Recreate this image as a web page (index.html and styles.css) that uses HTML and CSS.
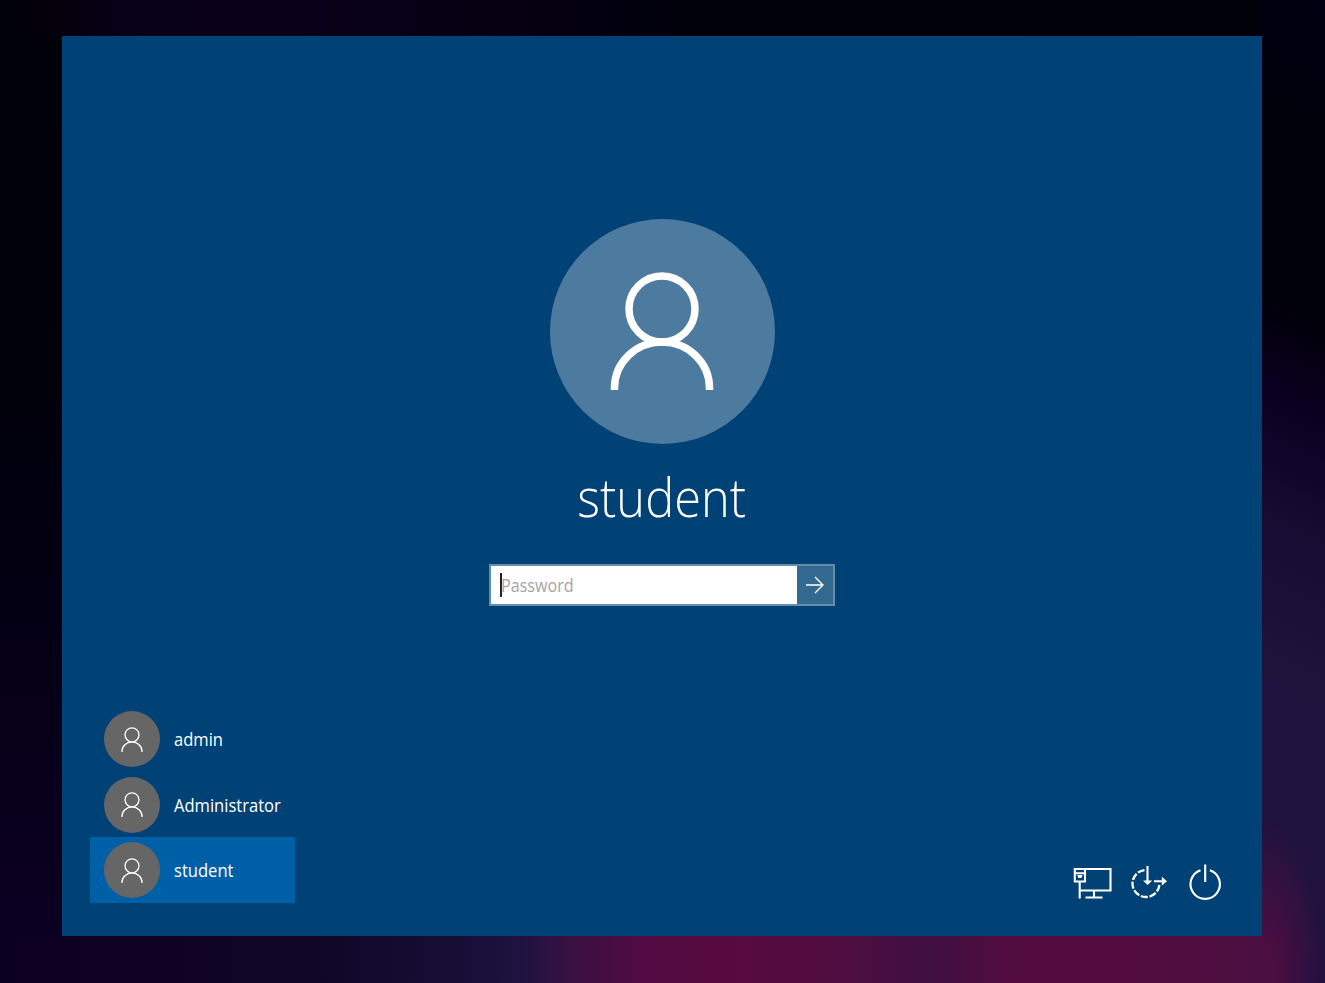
FILE: index.html
```html
<!DOCTYPE html>
<html lang="en">
<head>
<meta charset="utf-8">
<title>Sign in</title>
<link rel="stylesheet" href="styles.css">
</head>
<body>
<svg class="defs" aria-hidden="true">
  <symbol id="person" viewBox="0 0 104 118">
    <circle cx="52" cy="37" r="33"/>
    <path d="M4.500 118v-2a47.500 46 0 0 1 95 0v2"/>
  </symbol>
</svg>
<main class="screen">
  <section class="login">
    <div class="avatar"><svg class="avatar-icon"><use href="#person"/></svg></div>
    <h1 class="name">student</h1>
    <form class="password">
      <div class="field"><span class="caret"></span><span class="hint">Password</span></div>
      <button class="submit" type="button" aria-label="Submit">
        <svg class="arrow" viewBox="0 0 20 20"><path d="M1 10h17M10 2l8 8-8 8"/></svg>
      </button>
    </form>
  </section>
  <footer class="bottom">
    <ul class="users">
      <li class="user"><span class="thumb"><svg class="thumb-icon"><use href="#person"/></svg></span><span class="label">admin</span></li>
      <li class="user"><span class="thumb"><svg class="thumb-icon"><use href="#person"/></svg></span><span class="label">Administrator</span></li>
      <li class="user selected"><span class="thumb"><svg class="thumb-icon"><use href="#person"/></svg></span><span class="label">student</span></li>
    </ul>
    <div class="tools">
      <svg class="tool" viewBox="0 0 40 40"><path d="M12 6h25.500v21.500H7M1.800 6h10.200v12.500H1.800zM1.800 10.200h10.200M6.700 18.500v17M21 27.500v6.500M12.500 34.500h17"/><path class="solid" d="M4.200 12h5.400l-1.200 3h-3z"/></svg>
      <svg class="tool" viewBox="0 0 40 40"><path class="dashes" pathLength="68" d="M15.500 7.100A13.500 13.500 0 1 0 30.400 22"/><path d="M18.500 3v15.500M25 18.200h9"/><path class="solid" d="M14 17.500h9.200l-4.600 4.500zM32.800 13.800l5.200 4.400-5.200 4.400z"/></svg>
      <svg class="tool" viewBox="0 0 40 40"><path d="M15.500 7.200a14.700 14.700 0 1 0 9.400 0M20.200 1.500v17.500"/></svg>
    </div>
  </footer>
</main>
</body>
</html>
```
FILE: styles.css
```css
* { box-sizing: border-box; }
body {
  margin: 0;
  width: 1325px;
  height: 983px;
  padding: 36px 63px 47px 62px;
  overflow: hidden;
  font-family: "Open Sans", "Noto Sans", sans-serif;
  color: #fff;
  background:
    radial-gradient(ellipse 62px 150px at 0 973px, #4b0e40 20%, #4b0e4000) 1262px 0 / 63px 983px no-repeat,
    linear-gradient(90deg, #0c0022, #0f0224 160px, #110728 330px, #150d33 440px, #1f1241 525px, #3a1042 570px, #500b42 640px, #580a3f 730px, #4d0d40 850px, #3f1040 930px, #500c40 1000px, #540b3f 1080px, #4b0e40 1262px) 0 936px / 1262px 47px no-repeat,
    linear-gradient(205deg, #000012, #000009 150px, #000008 290px, #0b0021 380px, #180c33 500px, #20143e 650px, #21123f 850px, #201040) 1262px 0 / 63px 983px no-repeat,
    linear-gradient(90deg, #000009, #04000d 60px, #09001a 150px, #0a001a 270px, #060013 480px, #00000b 700px, #000009) 0 0 / 1262px 36px no-repeat,
    linear-gradient(#000009, #00000a 370px, #040014 620px, #0c0022 936px, #0c0022);
}
.defs { position: absolute; width: 0; height: 0; }
svg { display: block; fill: none; stroke: #fff; }
.screen {
  width: 1200px;
  height: 900px;
  padding: 182.600px 37px 33px 28px;
  background: #004275;
  display: flex;
  flex-direction: column;
  justify-content: space-between;
}
.login { display: flex; flex-direction: column; align-items: center; padding-left: 9px; }
.avatar {
  width: 225px;
  height: 225px;
  border-radius: 50%;
  background: #4d7a9f;
  display: flex;
  justify-content: center;
  padding-top: 53.500px;
}
.avatar-icon { width: 104px; height: 118px; stroke-width: 7.5; }
.name {
  margin: 18.600px 0 0;
  height: 70px;
  line-height: 70px;
  font-size: 53px;
  font-weight: 300;
  transform: scaleX(.92);
}
.password { margin: 31.400px 0 0; width: 346px; height: 42px; border: 2px solid #668eac; display: flex; }
.field {
  width: 306px;
  background: #fff;
  display: flex;
  align-items: center;
  padding-left: 9px;
}
.caret { width: 1.500px; height: 24px; background: #222; }
.hint { font-size: 18px; line-height: 24px; color: #a5a5a5; transform: scaleX(.895); transform-origin: left; margin-left: -1px; }
.submit { flex: 1; border: 0; padding: 0; background: #33688f; display: flex; align-items: center; justify-content: center; }
.arrow { width: 20px; height: 20px; stroke-width: 1.4; }
.bottom { display: flex; justify-content: space-between; align-items: flex-end; }
.users { list-style: none; margin: 0; padding: 0; width: 205px; }
.user { height: 65.600px; padding-left: 14px; display: flex; align-items: center; gap: 14px; }
.selected { background: #0060a7; }
.thumb { width: 56px; height: 56px; border-radius: 50%; background: #666; display: flex; align-items: center; justify-content: center; }
.thumb-icon { width: 22px; height: 25px; stroke-width: 6.200; }
.label { font-size: 18px; line-height: 24px; padding-top: .5px; transform: scaleX(.92); transform-origin: left; }
.tools { display: flex; gap: 16px; }
.tool { width: 40px; height: 40px; stroke-width: 2.100; }
.dashes { stroke-dasharray: 8 2; stroke-width: 2.300; }
.solid { fill: #fff; stroke: none; }
```
